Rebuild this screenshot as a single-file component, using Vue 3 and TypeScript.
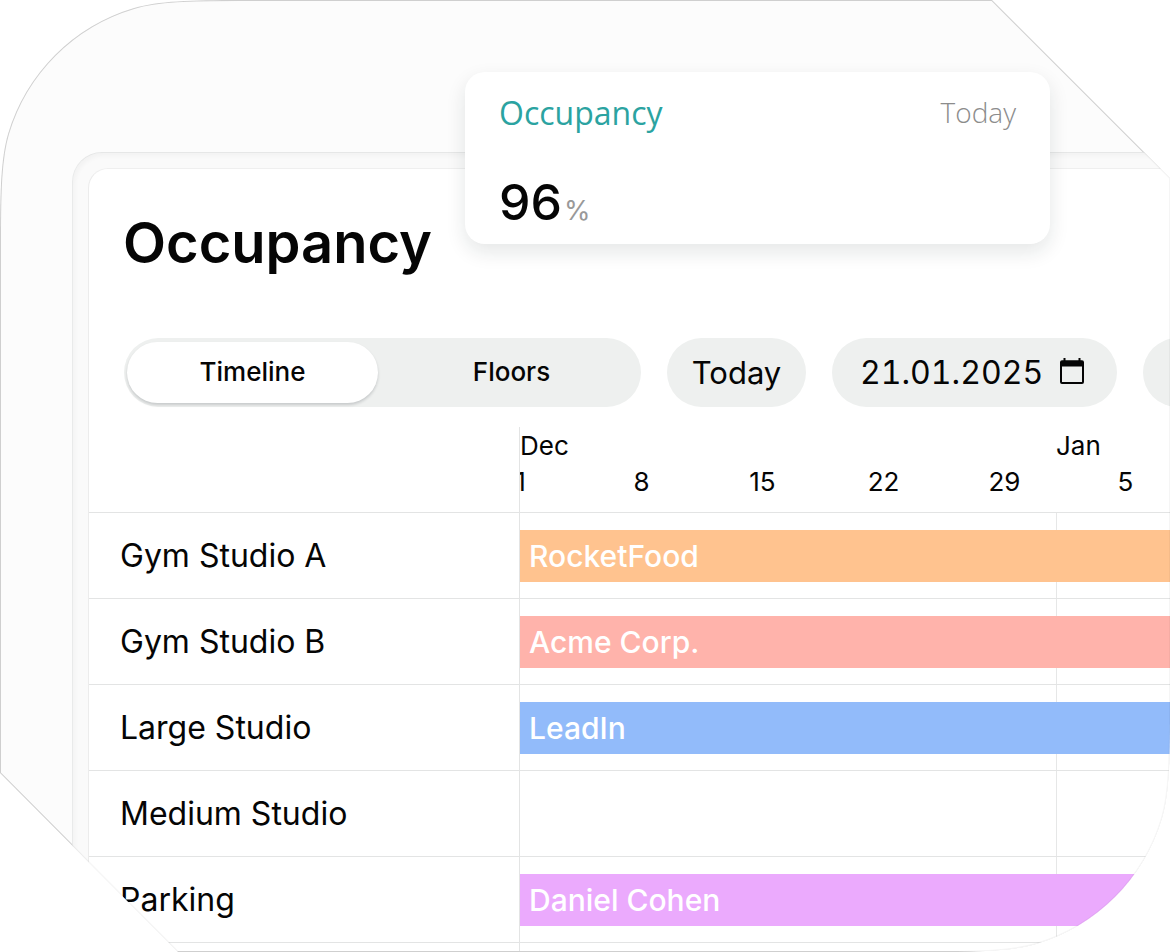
<script setup lang="ts">
import { ref } from 'vue'

interface Booking {
  tenant: string
  tone: string
}

interface Room {
  name: string
  booking?: Booking
}

const view = ref<'timeline' | 'floors'>('timeline')
const date = ref('21.01.2025')
const months: string[] = ['Dec', 'Jan']
const weeks: number[] = [1, 8, 15, 22, 29, 5]

const rooms: Room[] = [
  { name: 'Gym Studio A', booking: { tenant: 'RocketFood', tone: 'orange' } },
  { name: 'Gym Studio B', booking: { tenant: 'Acme Corp.', tone: 'coral' } },
  { name: 'Large Studio', booking: { tenant: 'LeadIn', tone: 'blue' } },
  { name: 'Medium Studio' },
  { name: 'Parking', booking: { tenant: 'Daniel Cohen', tone: 'violet' } },
]

const outline =
  'M240 0H992L1170 178V712C1170 762 1169 794 1162 818A187 187 0 0 1 1036 944C1012 951 980 952 930 952H178L0 773V240C0 190 1 158 8 134A187 187 0 0 1 134 8C158 1 190 0 240 0Z'
</script>

<template>
  <main class="frame">
    <svg class="defs" width="0" height="0" aria-hidden="true">
      <clipPath id="frame-shape" clipPathUnits="objectBoundingBox">
        <path :d="outline" transform="scale(0.00085470085 0.00105042017)" />
      </clipPath>
    </svg>

    <svg class="edge" viewBox="0 0 1170 952" preserveAspectRatio="none" aria-hidden="true">
      <path :d="outline" />
    </svg>

    <div class="tray">
      <section class="panel">
        <h1 class="title">Occupancy</h1>

        <div class="toolbar">
          <div class="segment" role="group" aria-label="View">
            <button
              type="button"
              class="segment-item"
              :class="{ active: view === 'timeline' }"
              @click="view = 'timeline'"
            >
              Timeline
            </button>
            <button
              type="button"
              class="segment-item"
              :class="{ active: view === 'floors' }"
              @click="view = 'floors'"
            >
              Floors
            </button>
          </div>
          <button type="button" class="pill today">Today</button>
          <label class="pill date">
            <input v-model="date" class="date-input" type="text" aria-label="Date" />
            <svg class="calendar" viewBox="0 0 24 26" aria-hidden="true">
              <path
                fill-rule="evenodd"
                d="M3.5 0H5.5V2.2H18.5V0H20.5V2.2H22A2 2 0 0 1 24 4.2V24A2 2 0 0 1 22 26H2A2 2 0 0 1 0 24V4.2A2 2 0 0 1 2 2.2H3.5ZM2 8.5V24H22V8.5Z"
              />
            </svg>
          </label>
          <button type="button" class="pill more" aria-label="More"></button>
        </div>

        <table class="timeline">
          <thead>
            <tr>
              <td class="corner"></td>
              <th class="scale" scope="col">
                <div class="months">
                  <span v-for="m in months" :key="m" class="month">{{ m }}</span>
                </div>
                <div class="weeks">
                  <span v-for="w in weeks" :key="w" class="week">{{ w }}</span>
                </div>
              </th>
            </tr>
          </thead>
          <tbody>
            <tr v-for="room in rooms" :key="room.name" class="row">
              <th class="room" scope="row">{{ room.name }}</th>
              <td class="slot">
                <div v-if="room.booking" class="bar" :class="room.booking.tone">
                  {{ room.booking.tenant }}
                </div>
              </td>
            </tr>
            <tr class="tail">
              <td></td>
              <td class="slot"></td>
            </tr>
          </tbody>
        </table>
      </section>
    </div>

    <svg class="edge faint" viewBox="0 0 1170 952" preserveAspectRatio="none" aria-hidden="true">
      <path :d="outline" />
    </svg>

    <aside class="card">
      <header class="card-head">
        <h2 class="card-title">Occupancy</h2>
        <span class="card-when">Today</span>
      </header>
      <p class="card-value">96<span class="unit">%</span></p>
    </aside>
  </main>
</template>

<style>
body {
  margin: 0;
  background: #fff;
}
</style>

<style scoped>
.frame {
  position: relative;
  box-sizing: border-box;
  min-height: 100vh;
  padding: 152px 0 0 72px;
  overflow: hidden;
  background: #fcfcfc;
  clip-path: url(#frame-shape);
  font-family: Inter, "Liberation Sans", sans-serif;
  color: #050505;
}

.defs {
  position: absolute;
}

.edge {
  position: absolute;
  inset: 0;
  width: 100%;
  height: 100%;
  pointer-events: none;
}

.edge path {
  fill: none;
  stroke: #000;
  stroke-opacity: 0.14;
  stroke-width: 2;
}

.edge.faint path {
  stroke-opacity: 0.04;
}

.tray {
  position: relative;
  padding: 15px 0 0 15px;
  border-top: 1px solid #e6e7e7;
  border-left: 1px solid #e9eaea;
  border-top-left-radius: 30px;
  background: #fafafa;
  box-shadow: inset 2px 3px 4px rgba(0, 0, 0, 0.03);
}

.panel {
  box-sizing: border-box;
  overflow: hidden;
  border-top: 1px solid #efefef;
  border-left: 1px solid #ececec;
  border-top-left-radius: 20px;
  background: #fff;
}

.title {
  margin: 0;
  padding: 40px 0 0 34px;
  font-size: 56px;
  line-height: 68px;
  font-weight: 600;
}

.toolbar {
  display: flex;
  gap: 26px;
  margin: 61px 0 20px;
  padding-left: 35px;
}

.segment {
  display: flex;
  flex: none;
  justify-content: space-between;
  box-sizing: border-box;
  width: 517px;
  height: 69px;
  padding: 4px 4px 4px 3px;
  border-radius: 35px;
  background: #eef0ef;
}

.segment-item {
  flex: none;
  width: 251px;
  padding: 0 0 2px;
  border: 0;
  border-radius: 31px;
  background: transparent;
  color: inherit;
  font: 500 26px/32px Inter, "Liberation Sans", sans-serif;
}

.segment-item.active {
  background: #fff;
  box-shadow: 0 2px 3px rgba(20, 30, 40, 0.18);
}

.pill {
  display: flex;
  flex: none;
  align-items: center;
  justify-content: center;
  box-sizing: border-box;
  height: 69px;
  padding: 0;
  border: 0;
  border-radius: 35px;
  background: #eef0ef;
  color: inherit;
  font: 400 31px/40px Inter, "Liberation Sans", sans-serif;
}

.today,
.more {
  width: 139px;
}

.date {
  justify-content: space-between;
  width: 285px;
  padding: 0 33px 0 28px;
  font-size: 32px;
}

.date-input {
  width: 190px;
  padding: 0;
  border: 0;
  outline: 0;
  background: transparent;
  color: inherit;
  font: inherit;
  font-variant-numeric: tabular-nums;
}

.calendar {
  flex: none;
  width: 24px;
  height: 26px;
  margin-bottom: 3px;
  fill: #050505;
}

.timeline {
  width: 100%;
  border-collapse: separate;
  border-spacing: 0;
  table-layout: fixed;
}

.corner {
  width: 430px;
}

.timeline th,
.timeline td {
  padding: 0;
  text-align: left;
  font-weight: 400;
}

.timeline .scale {
  box-sizing: border-box;
  height: 85px;
  overflow: hidden;
  padding-top: 1px;
  border-left: 1px solid #e3e4e4;
  vertical-align: top;
  font-size: 26px;
  line-height: 36px;
  white-space: nowrap;
}

.months,
.weeks {
  display: flex;
  overflow: hidden;
}

.month {
  flex: none;
  width: 536px;
}

.week {
  flex: none;
  width: 121px;
  text-align: center;
}

.week:first-child {
  margin-left: -60px;
}

.row th,
.row td {
  box-sizing: border-box;
  height: 86px;
  border-top: 1px solid #e3e4e4;
}

.tail td {
  height: 8px;
  border-top: 1px solid #e3e4e4;
}

.timeline .room {
  padding-left: 31px;
  font-size: 32px;
  line-height: 40px;
}

.timeline .slot {
  border-left: 1px solid #e3e4e4;
  background: linear-gradient(#e6e7e7, #e6e7e7) 536px 0 / 1px 100% no-repeat;
}

.bar {
  padding-left: 9px;
  color: #fff;
  font-size: 30px;
  line-height: 52px;
  font-weight: 500;
}

.orange {
  background: #ffc38f;
}

.coral {
  background: #ffb3ab;
}

.blue {
  background: #92bbfa;
}

.violet {
  background: #ebaafd;
}

.card {
  position: absolute;
  top: 72px;
  right: 120px;
  left: 465px;
  box-sizing: border-box;
  height: 172px;
  padding: 20px 34px;
  border-radius: 20px;
  background: #fff;
  box-shadow: 0 8px 20px rgba(20, 40, 35, 0.11);
}

.card-head {
  display: flex;
  justify-content: space-between;
  font-family: "Open Sans", "Noto Sans", sans-serif;
  line-height: 42px;
}

.card-title {
  margin: 0;
  color: #2ba3a1;
  font-size: 32px;
  font-weight: 400;
}

.card-when {
  color: #8c8c8c;
  font-size: 28px;
  line-height: 40px;
  font-weight: 300;
}

.card-value {
  margin: 36px 0 0;
  font-size: 50px;
  line-height: 64px;
  font-weight: 500;
}

.unit {
  margin-left: 2px;
  color: #999;
  font-size: 27px;
  font-weight: 400;
}
</style>
